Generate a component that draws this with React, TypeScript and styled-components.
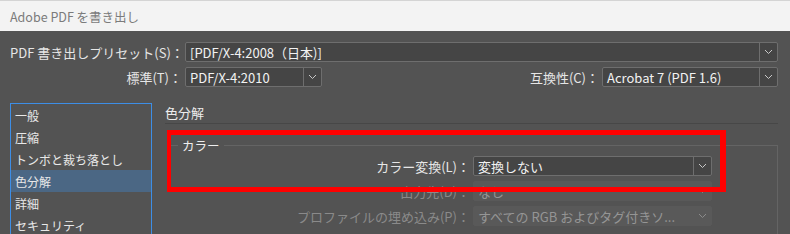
import React from "react";
import styled, { createGlobalStyle } from "styled-components";

const GlobalStyle = createGlobalStyle`
  html, body { margin: 0; padding: 0; }
  body {
    background: #535353;
    font-family: "Noto Sans CJK JP", "Noto Sans", sans-serif;
    width: 790px;
    height: 234px;
    overflow: hidden;
  }
  * { box-sizing: border-box; }
`;

const Window = styled.div`
  width: 790px;
  height: 234px;
  overflow: hidden;
  background: #535353;
  display: flex;
  flex-direction: column;
`;

const TitleBar = styled.div`
  height: 31px;
  flex: none;
  background: #f3f3f3;
  border-top: 1px solid #d4d4d4;
  display: flex;
  align-items: center;
  padding-left: 10px;
  font-size: 12.5px;
  color: #7b7b7b;
`;

const Body = styled.div`
  padding: 11px 12px 0 10px;
  display: flex;
  flex-direction: column;
  flex: 1;
  min-height: 0;
`;

const TopRow = styled.div<{ $mt?: number }>`
  display: flex;
  align-items: center;
  height: 20px;
  margin-top: ${(p) => p.$mt ?? 0}px;
`;

const Label = styled.div<{ $w?: number; $disabled?: boolean }>`
  ${(p) => (p.$w ? `width: ${p.$w}px; flex: none;` : "")}
  text-align: right;
  font-size: 13px;
  white-space: nowrap;
  color: ${(p) => (p.$disabled ? "#8a8a8a" : "#e6e6e6")};
  padding-right: 3px;
`;

const Spacer = styled.div`
  flex: 1;
`;

const SelectBox = styled.div<{ $w?: number; $disabled?: boolean }>`
  ${(p) => (p.$w ? `width: ${p.$w}px; flex: none;` : "flex: 1;")}
  height: 20px;
  display: flex;
  align-items: stretch;
  border: 1px solid ${(p) => (p.$disabled ? "#595959" : "#6e6e6e")};
  border-radius: 2px;
  background: ${(p) => (p.$disabled ? "#595959" : "#454545")};
  color: ${(p) => (p.$disabled ? "#959595" : "#f2f2f2")};
  font-size: 13px;
`;

const SelectValue = styled.div`
  flex: 1;
  display: flex;
  align-items: center;
  padding-left: 4px;
  white-space: nowrap;
  overflow: hidden;
  line-height: 1;
`;

const ChevronCell = styled.div<{ $disabled?: boolean }>`
  width: 18px;
  flex: none;
  display: flex;
  align-items: center;
  justify-content: center;
  border-left: 1px solid ${(p) => (p.$disabled ? "transparent" : "#6e6e6e")};
  color: ${(p) => (p.$disabled ? "#8c8c8c" : "#c8c8c8")};
`;

const Chevron = () => (
  <svg width="9" height="6" viewBox="0 0 9 6">
    <polyline points="1,1 4.5,4.5 8,1" fill="none" stroke="currentColor" strokeWidth="1" />
  </svg>
);

const Select = ({ value, w, disabled }: { value: string; w?: number; disabled?: boolean }) => (
  <SelectBox $w={w} $disabled={disabled}>
    <SelectValue>{value}</SelectValue>
    <ChevronCell $disabled={disabled}>
      <Chevron />
    </ChevronCell>
  </SelectBox>
);

const Main = styled.div`
  margin-top: 16px;
  display: flex;
  gap: 13px;
  flex: 1;
  min-height: 0;
  position: relative;
`;

const List = styled.div`
  width: 142px;
  flex: none;
  border: 1px solid #3d8ee6;
  border-bottom: none;
  height: 140px;
  display: flex;
  flex-direction: column;
`;

const ListItem = styled.div<{ $selected?: boolean }>`
  height: 22px;
  flex: none;
  display: flex;
  align-items: center;
  padding-left: 4px;
  font-size: 12px;
  color: #e8e8e8;
  background: ${(p) => (p.$selected ? "#4b6784" : "transparent")};
  white-space: nowrap;
`;

const Panel = styled.div`
  flex: 1;
  display: flex;
  flex-direction: column;
`;

const PanelTitle = styled.div`
  font-size: 13px;
  color: #ececec;
  height: 20px;
  display: flex;
  align-items: center;
  border-bottom: 1px solid #474747;
  padding-bottom: 1px;
  box-sizing: content-box;
`;

const Group = styled.fieldset`
  margin: 12px 0 0 5px;
  padding: 1px 65px 0 0;
  border: 1px solid #646464;
  border-left: none;
  border-bottom: none;
  min-height: 120px;
  display: grid;
  grid-template-columns: 1fr 239px;
  grid-auto-rows: 20px;
  row-gap: 5px;
  align-items: center;
`;

const Legend = styled.legend`
  margin-left: 8px;
  padding: 0 4px;
  font-size: 12.5px;
  color: #eeeeee;
`;

const Highlight = styled.div`
  position: absolute;
  left: 157px;
  top: 27px;
  width: 559px;
  height: 62px;
  border: 5px solid #ff0000;
  border-left-width: 4px;
  border-right-width: 6px;
  pointer-events: none;
`;

const items = ["一般", "圧縮", "トンボと裁ち落とし", "色分解", "詳細", "セキュリティ"];

export default function App() {
  return (
    <>
      <GlobalStyle />
      <Window>
        <TitleBar>Adobe PDF を書き出し</TitleBar>
        <Body>
          <TopRow>
            <Label $w={175}>PDF 書き出しプリセット(S)：</Label>
            <Select value="[PDF/X-4:2008（日本)]" />
          </TopRow>
          <TopRow $mt={5}>
            <Label $w={175}>標準(T)：</Label>
            <Select value="PDF/X-4:2010" w={137} />
            <Spacer />
            <Label>互換性(C)：</Label>
            <Select value="Acrobat 7 (PDF 1.6)" w={176} />
          </TopRow>
          <Main>
            <List>
              {items.map((it) => (
                <ListItem key={it} $selected={it === "色分解"}>
                  {it}
                </ListItem>
              ))}
            </List>
            <Panel>
              <PanelTitle>色分解</PanelTitle>
              <Group>
                <Legend>カラー</Legend>
                <Label>カラー変換(L)：</Label>
                <Select value="変換しない" />
                <Label $disabled>出力先(D)：</Label>
                <Select value="なし" disabled />
                <Label $disabled>プロファイルの埋め込み(P)：</Label>
                <Select value="すべての RGB およびタグ付きソ..." disabled />
              </Group>
            </Panel>
            <Highlight />
          </Main>
        </Body>
      </Window>
    </>
  );
}
